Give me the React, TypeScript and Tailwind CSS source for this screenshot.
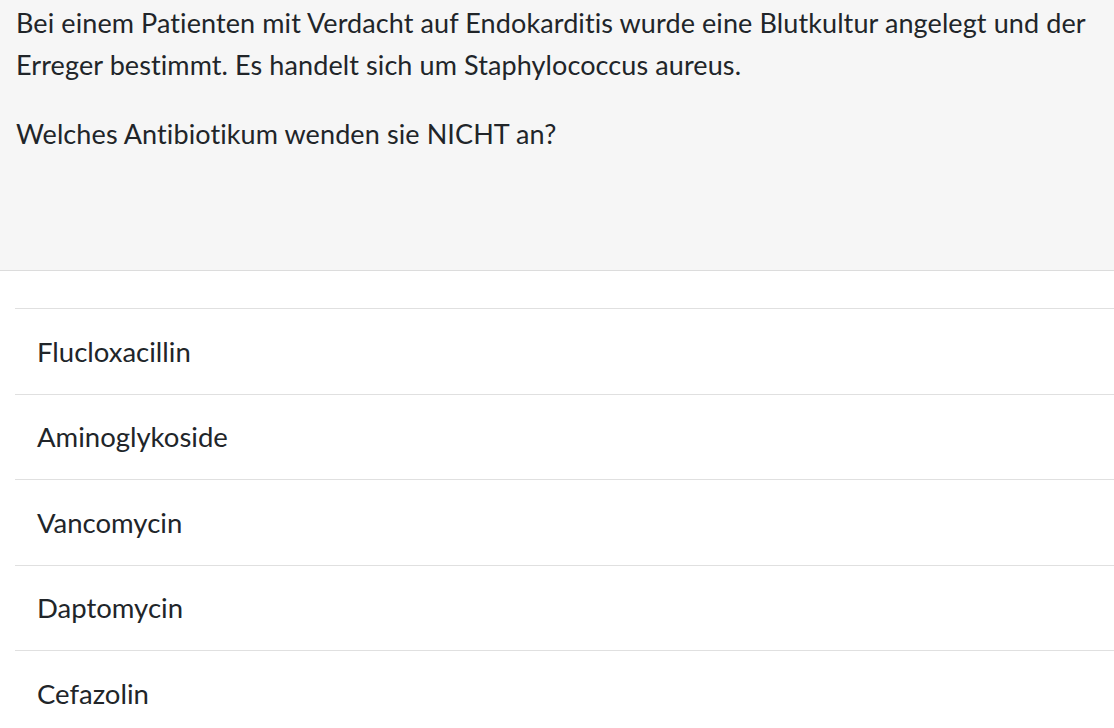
import React from 'react';

const options: string[] = ['Flucloxacillin', 'Aminoglykoside', 'Vancomycin', 'Daptomycin', 'Cefazolin'];

const App: React.FC = () => {
  return (
    <div
      className="min-h-screen bg-white text-[#212529] [font-variant-ligatures:none]"
      style={{ fontFamily: 'Lato, "Noto Sans", sans-serif' }}
    >
      <div className="bg-[#f6f6f6] border-b border-[#dcdcdc] h-[271px] px-4 pt-[2px]">
        <p className="text-[27px] tracking-[0.1px] leading-[42px]">
          Bei einem Patienten mit Verdacht auf Endokarditis wurde eine Blutkultur angelegt und der Erreger bestimmt. Es
          handelt sich um Staphylococcus aureus.
        </p>
        <p className="text-[27px] tracking-[0.1px] leading-[42px] mt-[27px]">Welches Antibiotikum wenden sie NICHT an?</p>
      </div>
      <ul className="pl-[15px] pt-[37px]">
        {options.map((opt) => (
          <li key={opt} className="border-t border-[#e0e0e0] h-[85.5px] flex items-center pl-[22px] text-[27.5px]">
            {opt}
          </li>
        ))}
      </ul>
    </div>
  );
};

export default App;
